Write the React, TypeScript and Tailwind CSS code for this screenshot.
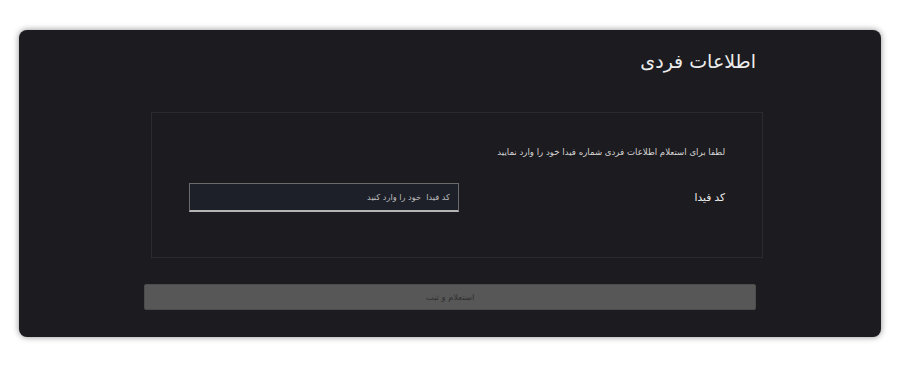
export default function App() {
    return (
        <div className="w-[900px] h-[366px] bg-white pt-[30px] px-[19px]">
            {/* Card */}
            <div
                dir="rtl"
                className="h-[307px] rounded-lg bg-[#1c1b1f] shadow-[0_0_6px_rgba(0,0,0,0.45)] pr-[125px] pt-[17px]"
                style={{ fontFamily: '"DejaVu Sans", Tahoma, sans-serif' }}
            >
                <div className="w-[612px]">
                    <h1 className="text-[19px] leading-[28px] text-[#ececec] h-[28px]">اطلاعات فردی</h1>

                    {/* Form box */}
                    <div className="mt-[37px] mr-[-7px] w-[612px] h-[146px] border border-[#2b2a2f] pr-[37px] pl-[37px] pt-[31px]">
                        <p className="text-[8.6px] leading-[16px] text-[#d6d6d6]">
                            لطفا برای استعلام اطلاعات فردی شماره فیدا خود را وارد نمایید
                        </p>
                        <div className="flex items-center justify-between mt-[23px]">
                            <label className="text-[10.5px] font-normal text-[#f0f0f0]">کد فیدا</label>
                            <input
                                placeholder="کد فیدا  خود را وارد کنید"
                                className="w-[270px] h-[29px] bg-[#1e2029] border border-[#6b6b6b] border-b-2 border-b-[#b5b5b5] px-2 text-[8.2px] text-[#cfcfcf] placeholder:text-[#bdbdbd] outline-none"
                                style={{ fontFamily: '"DejaVu Sans", Tahoma, sans-serif' }}
                            />
                        </div>
                    </div>

                    {/* Submit */}
                    <button
                        className="mt-[26px] w-[612px] h-[26px] bg-[#575757] border border-[#4c4c4c] rounded-[2px] text-[8.4px] text-[#2f2f2f]"
                        style={{ fontFamily: '"DejaVu Sans", Tahoma, sans-serif' }}
                    >
                        استعلام و ثبت
                    </button>
                </div>
            </div>
        </div>
    );
}
